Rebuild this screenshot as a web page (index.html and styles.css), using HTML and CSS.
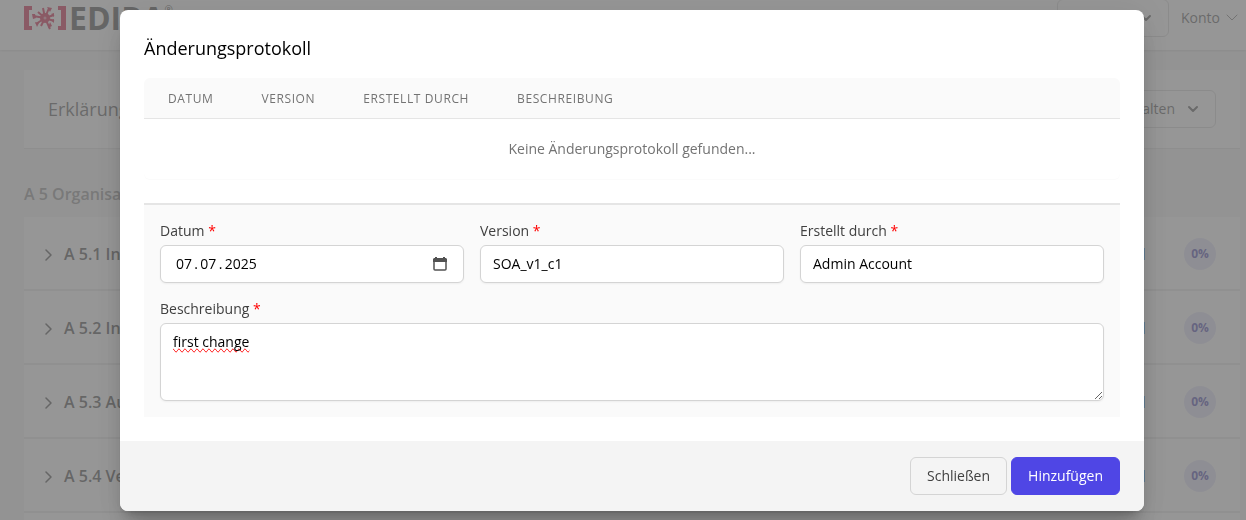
FILE: index.html
```html
<!DOCTYPE html>
<html lang="de">
<head>
<meta charset="utf-8">
<meta name="viewport" content="width=device-width, initial-scale=1">
<title>Änderungsprotokoll</title>
<link rel="stylesheet" href="styles.css">
</head>
<body>
<div class="page">
  <header class="topbar">
    <a class="logo" href="#" aria-label="Startseite">
      <svg class="logo-mark" viewBox="0 0 42 24" aria-hidden="true">
        <path d="M0 0h8v4H5v16h3v4H0zM42 0h-8v4h3v16h-3v4h8z"/>
        <g class="rays">
          <path d="M21 12L25 2M21 12L30 9M21 12L30 15M21 12L26 23M21 12L17 20M21 12L12 18M21 12L9 10M21 12L19 2M21 12L14 6"/>
        </g>
        <path d="M23 1l5 1-2 4zM8 8h3l1 4-3 1zM24 22l4-2-2-4zM11 16l4 1-2 4zM27 8l3-1v4zM27 14l3-1v4z"/>
        <circle cx="21" cy="12" r="5"/>
        <circle class="core" cx="21" cy="12" r="1.5"/>
      </svg>
      <span class="logo-name">EDIRA</span><span class="logo-reg">®</span>
    </a>
    <div class="topbar-actions">
      <button class="outline-button scope" type="button" aria-label="Bereich">
        <svg class="chevron" viewBox="0 0 12 12" aria-hidden="true"><path d="M2 4l4 4 4-4"/></svg>
      </button>
      <button class="account" type="button">Konto
        <svg class="chevron thin" viewBox="0 0 12 12" aria-hidden="true"><path d="M1 3l5 5 5-5"/></svg>
      </button>
    </div>
  </header>
  <main class="content">
    <section class="heading-card">
      <h1>Erklärung</h1>
      <button class="outline-button" type="button">Verwalten
        <svg class="chevron" viewBox="0 0 12 12" aria-hidden="true"><path d="M2 4l4 4 4-4"/></svg>
      </button>
    </section>
    <h2>A 5 Organisatorisch</h2>
    <ul class="controls">
      <li><svg class="expand" viewBox="0 0 8 14" aria-hidden="true"><path d="M2 3l5 5-5 5"/></svg><span class="control-name">A 5.1 Informationen</span><span class="bar"></span><span class="percent">0%</span></li>
      <li><svg class="expand" viewBox="0 0 8 14" aria-hidden="true"><path d="M2 3l5 5-5 5"/></svg><span class="control-name">A 5.2 Informationen</span><span class="bar"></span><span class="percent">0%</span></li>
      <li><svg class="expand" viewBox="0 0 8 14" aria-hidden="true"><path d="M2 3l5 5-5 5"/></svg><span class="control-name">A 5.3 Aufgaben</span><span class="bar"></span><span class="percent">0%</span></li>
      <li><svg class="expand" viewBox="0 0 8 14" aria-hidden="true"><path d="M2 3l5 5-5 5"/></svg><span class="control-name">A 5.4 Verantwortung</span><span class="bar"></span><span class="percent">0%</span></li>
      <li></li>
    </ul>
  </main>
</div>
<div class="backdrop">
  <form class="modal" role="dialog" aria-modal="true" aria-labelledby="dialog-title">
    <div class="modal-body">
      <h3 id="dialog-title">Änderungsprotokoll</h3>
      <div class="table-wrap">
        <table>
          <thead><tr><th>Datum</th><th>Version</th><th>Erstellt durch</th><th>Beschreibung</th></tr></thead>
          <tbody><tr><td colspan="4">Keine Änderungsprotokoll gefunden...</td></tr></tbody>
        </table>
      </div>
      <div class="fields">
        <div class="field">
          <label for="date">Datum <span class="required">*</span></label>
          <div class="input date-input">
            <input id="date" type="text" value="07&#8201;.&#8201;07&#8201;.&#8201;2025">
            <button class="picker" type="button" aria-label="Kalender öffnen">
              <svg viewBox="0 0 14 14" aria-hidden="true"><path class="fill" d="M2 1V0h2v1h6V0h2v1h1l1 1v3H0V2l1-1z"/><path d="M1 4v8q0 1 1 1h10q1 0 1-1V4"/></svg>
            </button>
          </div>
        </div>
        <div class="field">
          <label for="version">Version <span class="required">*</span></label>
          <input class="input" id="version" type="text" value="SOA_v1_c1">
        </div>
        <div class="field">
          <label for="author">Erstellt durch <span class="required">*</span></label>
          <input class="input" id="author" type="text" value="Admin Account">
        </div>
        <div class="field wide">
          <label for="description">Beschreibung <span class="required">*</span></label>
          <textarea class="input" id="description" rows="3">first change</textarea>
        </div>
      </div>
    </div>
    <div class="modal-footer">
      <button class="button" type="button">Schließen</button>
      <button class="button primary" type="submit">Hinzufügen</button>
    </div>
  </form>
</div>
</body>
</html>
```

FILE: styles.css
```css
* { box-sizing: border-box; }
body {
  margin: 0;
  background: #f4f4f4;
  color: #525252;
  font: 14px/20px "Open Sans", "Noto Sans", sans-serif;
}
button, input, textarea { font: inherit; color: inherit; margin: 0; }
h1, h2, h3, ul { margin: 0; padding: 0; font-weight: 400; }
svg { display: block; fill: none; stroke: currentColor; }

.page { height: 100vh; overflow: hidden; }
.topbar {
  display: flex;
  justify-content: space-between;
  align-items: flex-start;
  height: 50px;
  padding: 0 8px 0 24px;
  background: #fff;
  box-shadow: 0 1px 2px rgba(0, 0, 0, .15);
}
.logo { display: flex; padding-top: 6px; color: #404040; text-decoration: none; }
.logo-mark { width: 42px; height: 24px; fill: #d0103c; stroke: none; }
.rays { stroke: #d0103c; stroke-width: 2; }
.core { fill: #fff; fill-opacity: .5; }
.logo-name { padding-left: 3px; font-size: 32px; font-weight: 700; line-height: 24px; }
.logo-reg { font-size: 10px; line-height: 8px; }
.topbar-actions { display: flex; gap: 12px; }
.chevron { width: 12px; height: 12px; stroke-width: 2; stroke-linecap: round; stroke-linejoin: round; }
.chevron.thin { stroke-width: 1; color: #737373; }
.outline-button {
  display: flex;
  align-items: center;
  gap: 12px;
  height: 38px;
  padding: 0 16px;
  border: 1px solid #d4d4d4;
  border-radius: 6px;
  background: #fff;
}
.scope { width: 112px; justify-content: flex-end; margin-top: -1px; }
.account {
  display: flex;
  align-items: center;
  gap: 6px;
  height: 36px;
  padding: 0;
  border: 0;
  background: none;
}

.content { padding: 20px 6px 0 24px; }
.heading-card {
  display: flex;
  align-items: center;
  justify-content: space-between;
  padding: 20px 24px;
  background: #fff;
  box-shadow: 0 1px 1px rgba(0, 0, 0, .08);
}
.heading-card h1 { font-size: 18px; line-height: 28px; }
.content h2 { padding: 34px 0 11px; color: #8a8a8a; font-size: 16px; font-weight: 600; line-height: 24px; }
.controls { display: grid; gap: 2px; list-style: none; background: #e5e5e5; }
.controls li {
  display: flex;
  align-items: center;
  gap: 12px;
  height: 72px;
  padding: 1px 24px 0 20px;
  background: #fff;
  color: #404040;
}
.expand { width: 8px; height: 14px; stroke-width: 1.5; stroke-linecap: round; stroke-linejoin: round; }
.control-name { flex: 1; font-size: 16px; font-weight: 600; line-height: 24px; }
.bar { width: 60px; height: 12px; margin-right: 27px; background: #38a0f0; }
.percent {
  display: grid;
  place-items: center;
  width: 32px;
  height: 32px;
  border-radius: 50%;
  background: #e0e0f8;
  color: #4038a8;
  font-size: 12px;
  font-weight: 700;
  line-height: 16px;
}

.backdrop {
  position: fixed;
  inset: 0;
  display: flex;
  justify-content: center;
  align-items: flex-start;
  padding: 10px 102px 9px 120px;
  background: rgba(115, 115, 115, .75);
}
.modal {
  width: 100%;
  max-width: 1024px;
  overflow: hidden;
  border-radius: 8px;
  background: #fff;
  box-shadow: 0 20px 25px -5px rgba(0, 0, 0, .2), 0 0 30px rgba(0, 0, 0, .06), 0 8px 10px -6px rgba(0, 0, 0, .2);
}
.modal-body { padding: 24px; }
.modal h3 { color: #000; font-size: 18px; line-height: 28px; }
.table-wrap { margin: 16px 0 24px; overflow: hidden; border-radius: 6px; background: #fff; box-shadow: 0 1px 1px rgba(0, 0, 0, .02); }
table { width: 100%; border-collapse: collapse; color: #737373; }
th {
  width: 1px;
  padding: 13px 24px 11px;
  border-bottom: 1px solid #e5e5e5;
  background: #fafafa;
  font-size: 12px;
  font-weight: 400;
  letter-spacing: .05em;
  line-height: 16px;
  text-align: left;
  text-transform: uppercase;
  white-space: nowrap;
}
th:last-child { width: auto; }
td { padding: 20px 24px; text-align: center; }
.fields {
  display: grid;
  grid-template-columns: repeat(3, 1fr);
  gap: 16px;
  padding: 16px;
  border-top: 2px solid #e5e5e5;
  background: #fafafa;
}
.field { display: grid; gap: 4px; color: #404040; }
.wide { grid-column: 1 / -1; }
.required { color: #f00; }
.input {
  display: block;
  width: 100%;
  min-width: 0;
  padding: 8px 12px;
  border: 1px solid #d4d4d4;
  border-radius: 6px;
  background: #fff;
  color: #000;
  line-height: 20px;
  box-shadow: 0 1px 2px rgba(0, 0, 0, .05);
}
.date-input { display: flex; align-items: center; padding: 8px 16px 8px 15px; }
.date-input input { flex: 1; min-width: 0; height: 20px; padding: 0; border: 0; background: none; outline: 0; }
.picker { padding: 0; border: 0; background: none; color: #525252; }
.picker svg { width: 14px; height: 14px; stroke-width: 1.5; }
.picker .fill { fill: currentColor; stroke: none; }
textarea.input { height: 78px; resize: vertical; text-decoration-line: spelling-error; }
.modal-footer { display: flex; justify-content: flex-end; gap: 4px; padding: 16px 24px; background: #f4f4f4; }
.button {
  padding: 8px 16px;
  border: 1px solid #d4d4d4;
  border-radius: 6px;
  background: transparent;
  color: #404040;
}
.primary { border-color: #4f46e5; background: #4f46e5; color: #fff; }
```
